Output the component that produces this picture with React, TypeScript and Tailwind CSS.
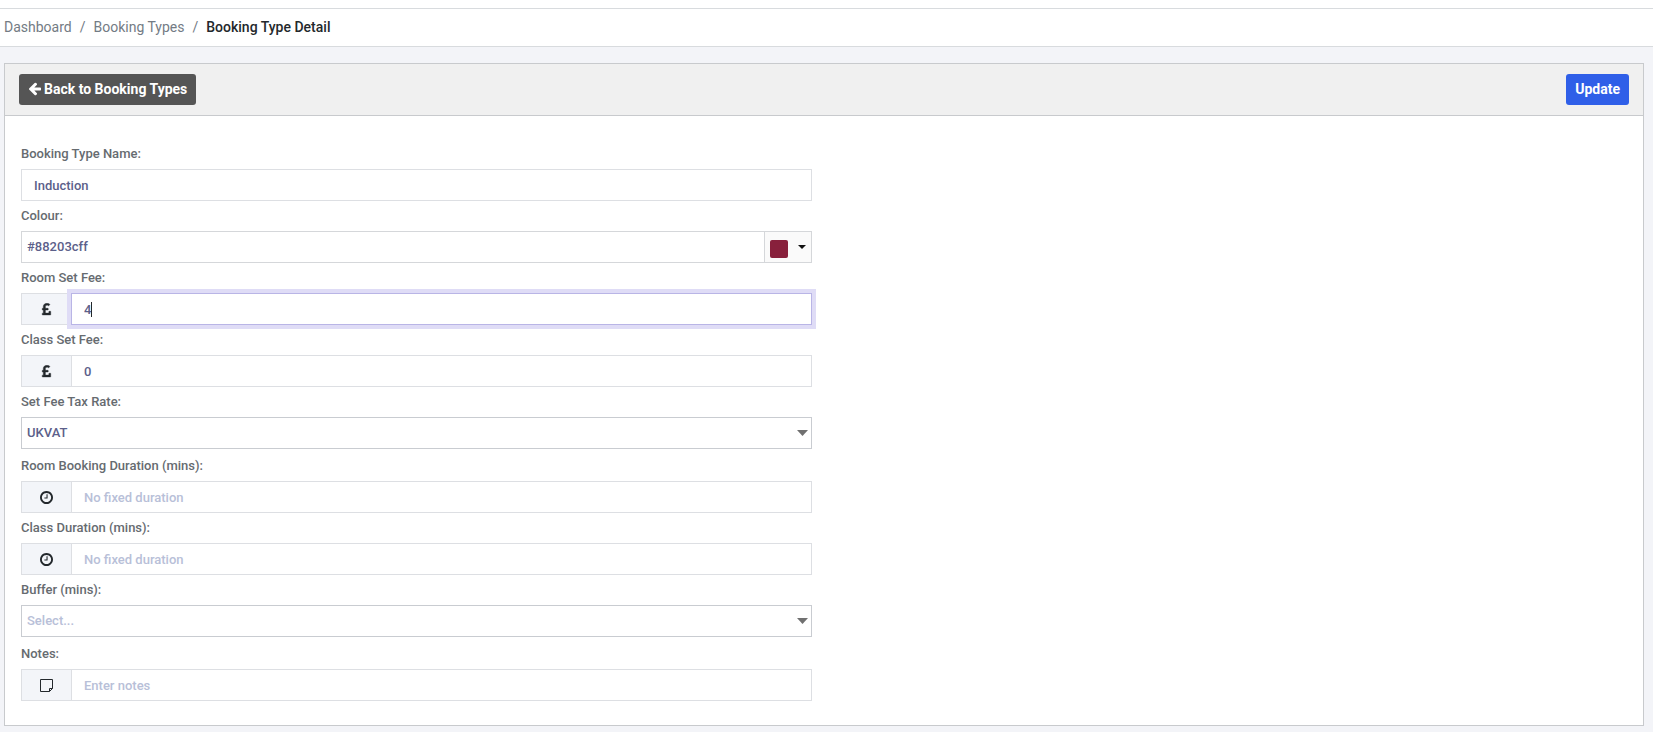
import { useState } from "react";
import type { ReactNode } from "react";

const ArrowLeftIcon = () => (
  <svg className="h-3.5 w-[13px] shrink-0" viewBox="64 128 1600 1664" fill="currentColor" aria-hidden="true">
    <path d="M1664 896v128q0 53-32.5 90.5t-84.5 37.5h-704l293 294q38 36 38 90t-38 90l-75 76q-37 37-90 37-52 0-91-37l-651-652q-37-37-37-90 0-52 37-91l651-650q38-38 91-38 52 0 90 38l75 74q38 38 38 91t-38 91l-293 293h704q52 0 84.5 37.5t32.5 90.5z" />
  </svg>
);

const PoundIcon = () => (
  <svg className="h-[13px] w-[13px]" viewBox="0 32 1024 1560" fill="currentColor" aria-hidden="true">
    <path
      stroke="currentColor"
      strokeWidth="50"
      d="M1020 1065v367q0 14-9 23t-23 9h-956q-14 0-23-9t-9-23v-150q0-13 9.5-22.5t22.5-9.5h97v-383h-95q-14 0-23-9.5t-9-22.5v-131q0-14 9-23t23-9h95v-223q0-171 123.5-282t314.5-111q185 0 335 125 9 8 10 20.5t-7 22.5l-103 127q-9 11-22 12-13 2-23-7-5-5-26-19t-69-32-93-18q-85 0-137 47t-52 123v215h305q13 0 22.5 9t9.5 23v131q0 13-9.5 22.5t-22.5 9.5h-305v379h414v-181q0-13 9-22.5t23-9.5h162q14 0 23 9.5t9 22.5z"
    />
  </svg>
);

const ClockIcon = () => (
  <svg className="h-[13px] w-[13px]" viewBox="0 128 1536 1536" fill="currentColor" aria-hidden="true">
    <path d="M896 544v448q0 14-9 23t-23 9h-320q-14 0-23-9t-9-23v-64q0-14 9-23t23-9h224v-352q0-14 9-23t23-9h64q14 0 23 9t9 23zm416 352q0-148-73-273t-198-198-273-73-273 73-198 198-73 273 73 273 198 198 273 73 273-73 198-198 73-273zm224 0q0 209-103 385.5t-279.5 279.5-385.5 103-385.5-103-279.5-279.5-103-385.5 103-385.5 279.5-279.5 385.5-103 385.5 103 279.5 279.5 103 385.5z" />
  </svg>
);

const NoteIcon = () => (
  <svg className="h-[13px] w-[13px]" viewBox="0 0 13 13" fill="none" stroke="currentColor" aria-hidden="true">
    <path d="M.5.5h12v9l-3 3h-9z" />
    <path d="M12.5 9.5h-3v3" />
  </svg>
);

const labelStyle = "flex h-[30px] items-center text-[13px] font-medium text-[#666b70]";
const inputStyle =
  "h-8 w-full min-w-0 border border-[#dddfe3] bg-white px-3 text-[13px] font-medium text-[#5c5f8a] outline-none placeholder:text-[#b8c0d8] focus:border-[#b9b5e6] focus:ring-4 focus:ring-[#dfdcf6]";
const selectStyle =
  "block h-8 w-full appearance-none border border-[#c9ccd1] bg-white px-[5px] text-[13px] font-medium outline-none";

type GroupProps = {
  id: string;
  label: string;
  icon: ReactNode;
  value: string;
  placeholder?: string;
  autoFocus?: boolean;
  onChange: (value: string) => void;
};

const InputGroup = ({ id, label, icon, value, placeholder, autoFocus, onChange }: GroupProps) => (
  <div>
    <label htmlFor={id} className={labelStyle}>
      {label}
    </label>
    <div className="flex">
      <span className="flex w-[50px] shrink-0 items-center justify-center border border-r-0 border-[#dddfe3] bg-[#f3f5f9] text-[#23282c]">
        {icon}
      </span>
      <div className="relative grow">
        <input
          id={id}
          className={`${inputStyle} peer block caret-transparent`}
          placeholder={placeholder}
          autoFocus={autoFocus}
          value={value}
          onChange={(e) => onChange(e.target.value)}
          type="text"
        />
        {/* text cursor, kept at the end of the value */}
        <div
          className="pointer-events-none absolute inset-0 hidden items-center overflow-hidden px-[13px] text-[13px] font-medium whitespace-pre peer-focus:flex"
          aria-hidden="true"
        >
          <span className="invisible">{value}</span>
          <span className="h-[15px] w-px bg-[#23282c]" />
        </div>
      </div>
    </div>
  </div>
);

type SelectProps = {
  id: string;
  label: string;
  value: string;
  options: string[];
  placeholder?: string;
  onChange: (value: string) => void;
};

const SelectField = ({ id, label, value, options, placeholder, onChange }: SelectProps) => (
  <div className="mb-0.5">
    <label htmlFor={id} className={labelStyle}>
      {label}
    </label>
    <div className="relative">
      <select
        id={id}
        className={`${selectStyle} ${value ? "text-[#5c5f8a]" : "text-[#b8c0d8]"}`}
        value={value}
        onChange={(e) => onChange(e.target.value)}
      >
        {placeholder && <option value="">{placeholder}</option>}
        {options.map((option) => (
          <option key={option}>{option}</option>
        ))}
      </select>
      <svg
        className="pointer-events-none absolute top-[13px] right-1 h-1.5 w-[11px]"
        viewBox="0 0 11 6"
        fill="#707070"
        aria-hidden="true"
      >
        <path d="M0 0h11L5.5 6z" />
      </svg>
    </div>
  </div>
);

const App = () => {
  const [name, setName] = useState("Induction");
  const [colour, setColour] = useState("#88203cff");
  const [roomFee, setRoomFee] = useState("4");
  const [classFee, setClassFee] = useState("0");
  const [taxRate, setTaxRate] = useState("UKVAT");
  const [roomDuration, setRoomDuration] = useState("");
  const [classDuration, setClassDuration] = useState("");
  const [buffer, setBuffer] = useState("");
  const [notes, setNotes] = useState("");

  return (
    <div className="min-h-screen bg-[#f3f4f8] font-[Roboto,sans-serif]">
      <nav className="border-b border-[#d8dbde] bg-white pt-2" aria-label="Breadcrumb">
        <ol className="flex h-[38px] items-center gap-2 border-t border-[#d8dbde] px-1 pb-0.5 text-sm text-[#737b84]">
          <li>
            <a href="#dashboard">Dashboard</a>
          </li>
          <li aria-hidden="true">/</li>
          <li>
            <a href="#booking-types">Booking Types</a>
          </li>
          <li aria-hidden="true">/</li>
          <li className="font-medium text-[#23282c]">Booking Type Detail</li>
        </ol>
      </nav>

      <main className="pt-4 pr-[9px] pb-[5px] pl-1">
        <div className="border border-[#c8cacd] bg-white">
          <div className="flex items-center justify-between border-b border-[#c8cacd] bg-[#f0f0f0] px-3.5 py-2.5">
            <a
              href="#booking-types"
              className="flex h-[31px] items-center gap-[3px] rounded-[3px] bg-[#555555] px-[9px] pb-0.5 text-sm font-bold text-white"
            >
              <ArrowLeftIcon />
              Back to Booking Types
            </a>
            <button
              className="h-[31px] rounded-[3px] bg-[#2f5fe8] px-[9px] pb-0.5 text-sm font-bold text-white"
              type="button"
            >
              Update
            </button>
          </div>

          <form className="px-4 pt-[23px] pb-6">
            <div className="w-1/2 pr-3">
              <label htmlFor="name" className={labelStyle}>
                Booking Type Name:
              </label>
              <input
                id="name"
                className={`${inputStyle} block`}
                value={name}
                onChange={(e) => setName(e.target.value)}
                type="text"
              />

              <label htmlFor="colour" className={labelStyle}>
                Colour:
              </label>
              <div className="flex h-8 border border-[#d5d7da]">
                <input
                  id="colour"
                  className="w-full min-w-0 bg-white px-[5px] text-[13px] font-medium text-[#5c5f8a] outline-none"
                  value={colour}
                  onChange={(e) => setColour(e.target.value)}
                  type="text"
                />
                <button
                  className="flex w-[47px] shrink-0 items-center justify-between border-l border-[#d5d7da] bg-[#fafafa] px-[5px]"
                  type="button"
                  aria-label="Pick colour"
                >
                  <span className="mt-1 h-[18px] w-[18px] rounded-xs" style={{ backgroundColor: colour }} />
                  <svg className="h-1 w-2" viewBox="0 0 8 4" fill="#111111" aria-hidden="true">
                    <path d="M0 0h8L4 4z" />
                  </svg>
                </button>
              </div>

              <InputGroup
                id="room-fee"
                label="Room Set Fee:"
                icon={<PoundIcon />}
                value={roomFee}
                onChange={setRoomFee}
                autoFocus
              />
              <InputGroup
                id="class-fee"
                label="Class Set Fee:"
                icon={<PoundIcon />}
                value={classFee}
                onChange={setClassFee}
              />
              <SelectField
                id="tax-rate"
                label="Set Fee Tax Rate:"
                value={taxRate}
                options={["UKVAT"]}
                onChange={setTaxRate}
              />
              <InputGroup
                id="room-duration"
                label="Room Booking Duration (mins):"
                icon={<ClockIcon />}
                placeholder="No fixed duration"
                value={roomDuration}
                onChange={setRoomDuration}
              />
              <InputGroup
                id="class-duration"
                label="Class Duration (mins):"
                icon={<ClockIcon />}
                placeholder="No fixed duration"
                value={classDuration}
                onChange={setClassDuration}
              />
              <SelectField
                id="buffer"
                label="Buffer (mins):"
                value={buffer}
                placeholder="Select..."
                options={["5", "10", "15", "30"]}
                onChange={setBuffer}
              />
              <InputGroup
                id="notes"
                label="Notes:"
                icon={<NoteIcon />}
                placeholder="Enter notes"
                value={notes}
                onChange={setNotes}
              />
            </div>
          </form>
        </div>
      </main>
    </div>
  );
};

export default App;
